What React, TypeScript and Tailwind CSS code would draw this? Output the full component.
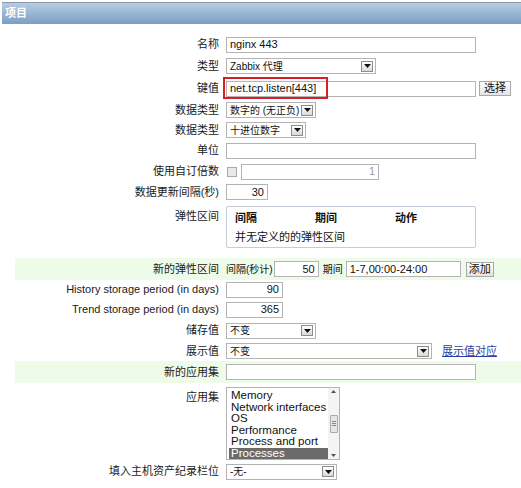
import React from "react";

// Zabbix 2.x "item" edit form — label column on the left, controls on the right.

const FONT = {
  fontFamily: '"Liberation Sans", "Noto Sans CJK SC", sans-serif',
};

function Arrow() {
  return (
    <span className="flex h-[11px] w-[12px] shrink-0 items-center justify-center border border-[#8d8d8d] bg-gradient-to-b from-white to-[#d9d9d9]">
      <svg width="7" height="4" viewBox="0 0 7 4" aria-hidden>
        <path d="M0 0h7L3.5 4z" fill="#111" />
      </svg>
    </span>
  );
}

function Select({ w, text }: { w: number; text: string }) {
  return (
    <div
      className="flex h-[16px] items-center justify-between gap-[2px] overflow-hidden whitespace-nowrap border border-[#b4b4b4] bg-white pl-[3px] pr-[2px] text-[10px] text-[#111]"
      style={{ width: w }}
    >
      <span>{text}</span>
      <Arrow />
    </div>
  );
}

function Input({
  w,
  value = "",
  right = false,
  muted = false,
}: {
  w: number;
  value?: string;
  right?: boolean;
  muted?: boolean;
}) {
  return (
    <div
      className={`flex h-[16px] items-center whitespace-nowrap border border-[#b4b4b4] bg-white px-[3px] text-[11px] ${
        right ? "justify-end" : ""
      } ${muted ? "text-[#9a9a9a]" : "text-[#111]"}`}
      style={{ width: w }}
    >
      {value}
    </div>
  );
}

function Button({ children, tight = false }: { children: React.ReactNode; tight?: boolean }) {
  return (
    <div
      className={`flex h-[15px] items-center border border-[#a9a9a9] bg-gradient-to-b from-white to-[#e4e4e4] text-[11px] text-[#111] ${
        tight ? "px-[2px]" : "px-[4px]"
      }`}
    >
      {children}
    </div>
  );
}

function Row({
  label,
  h,
  green = false,
  top = false,
  children,
}: {
  label: string;
  h: number;
  green?: boolean;
  top?: boolean;
  children: React.ReactNode;
}) {
  return (
    <div className="flex" style={{ height: h }}>
      <div className={`flex flex-1 ${top ? "items-start" : "items-center"} ${green ? "ml-[15px] bg-[#effbe9]" : ""}`}>
        <div
          className={`shrink-0 whitespace-nowrap pr-[7px] text-right text-[11px] text-[#1a1a1a] ${top ? "pt-[6px]" : ""}`}
          style={{ width: green ? 226 - 15 : 226 }}
        >
          {label}
        </div>
        <div className={`flex ${top ? "items-start" : "items-center"} gap-[4px]`}>{children}</div>
      </div>
    </div>
  );
}

const APPS = ["Memory", "Network interfaces", "OS", "Performance", "Process and port", "Processes"];

export default function App() {
  return (
    <div className="h-[488px] w-[521px] overflow-hidden bg-white" style={FONT}>
      {/* header bar */}
      <div className="ml-[2px] mt-[2px] border-t border-[#8c9aa8]">
        <div className="flex h-[21px] items-center bg-gradient-to-b from-[#b7cde2] to-[#7b9ec3] pl-[3px] text-[11px] font-bold text-white">
          项目
        </div>
      </div>

      <div className="mt-[10px]">
        <Row label="名称" h={21}>
          <Input w={250} value="nginx 443" />
        </Row>
        <Row label="类型" h={22}>
          <Select w={150} text="Zabbix 代理" />
        </Row>
        <Row label="键值" h={23}>
          <div className="relative">
            <Input w={250} value="net.tcp.listen[443]" />
            <div className="pointer-events-none absolute left-[-3px] top-[-4px] h-[22px] w-[105px] border-2 border-[#d61f26]" />
          </div>
          <div className="ml-[-1px]">
            <Button>选择</Button>
          </div>
        </Row>
        <Row label="数据类型" h={20}>
          <Select w={90} text="数字的 (无正负)" />
        </Row>
        <Row label="数据类型" h={20}>
          <Select w={80} text="十进位数字" />
        </Row>
        <Row label="单位" h={21}>
          <Input w={250} />
        </Row>
        <Row label="使用自订倍数" h={21}>
          <div className="ml-[1px] h-[10px] w-[10px] border border-[#a9a9a9] bg-[#e8e8e8]" />
          <Input w={138} value="1" right muted />
        </Row>
        <Row label="数据更新间隔(秒)" h={20}>
          <Input w={42} value="30" right />
        </Row>
        <Row label="弹性区间" h={50} top>
          <div className="mt-[4px] h-[42px] w-[250px] rounded-[2px] border border-[#c5cdd8] px-[8px] pt-[4px] text-[11px] leading-[14px] text-[#111]">
            <div className="flex font-bold">
              <span className="w-[80px]">间隔</span>
              <span className="w-[80px]">期间</span>
              <span>动作</span>
            </div>
            <div className="mt-[5px]">并无定义的的弹性区间</div>
          </div>
        </Row>
        <div className="h-[6px]" />
        <Row label="新的弹性区间" h={22} green>
          <div className="flex items-center text-[10px] text-[#111]">
            <span className="whitespace-nowrap">间隔(秒计)</span>
            <div className="ml-[1px]">
              <Input w={45} value="50" right />
            </div>
            <span className="ml-[4px]">期间</span>
            <div className="ml-[3px]">
              <Input w={115} value="1-7,00:00-24:00" />
            </div>
            <div className="ml-[5px]">
              <Button tight>添加</Button>
            </div>
          </div>
        </Row>
        <Row label="History storage period (in days)" h={19}>
          <Input w={57} value="90" right />
        </Row>
        <Row label="Trend storage period (in days)" h={21}>
          <Input w={57} value="365" right />
        </Row>
        <Row label="储存值" h={21}>
          <Select w={90} text="不变" />
        </Row>
        <Row label="展示值" h={20}>
          <Select w={206} text="不变" />
          <a className="ml-[6px] text-[11px] text-[#2a3d9c] underline">展示值对应</a>
        </Row>
        <Row label="新的应用集" h={22} green>
          <Input w={250} />
        </Row>
        <Row label="应用集" h={80} top>
          <div className="mt-[4px] flex h-[73px] w-[114px] border border-[#b4b4b4] bg-white">
            <div className="flex-1 pl-[2px] pt-[2px] text-[11.5px] leading-[11.5px] text-[#111]">
              {APPS.map((a, i) => (
                <div
                  key={a}
                  className={`pl-[2px] ${i === APPS.length - 1 ? "bg-[#6b6b6b] text-white" : ""}`}
                >
                  {a}
                </div>
              ))}
            </div>
            <div className="flex w-[11px] flex-col items-center justify-between bg-[#f4f4f4] py-[2px]">
              <svg width="5" height="3" viewBox="0 0 5 3" aria-hidden>
                <path d="M0 3L2.5 0L5 3z" fill="#555" />
              </svg>
              <div className="flex h-[18px] w-[8px] flex-col items-center justify-center gap-[1px] rounded-[1px] border border-[#aaa] bg-[#e6e6e6]">
                <span className="h-px w-[4px] bg-[#888]" />
                <span className="h-px w-[4px] bg-[#888]" />
                <span className="h-px w-[4px] bg-[#888]" />
              </div>
              <svg width="5" height="3" viewBox="0 0 5 3" aria-hidden>
                <path d="M0 0L2.5 3L5 0z" fill="#555" />
              </svg>
            </div>
          </div>
        </Row>
        <Row label="填入主机资产纪录栏位" h={17}>
          <Select w={111} text="-无-" />
        </Row>
      </div>
    </div>
  );
}
